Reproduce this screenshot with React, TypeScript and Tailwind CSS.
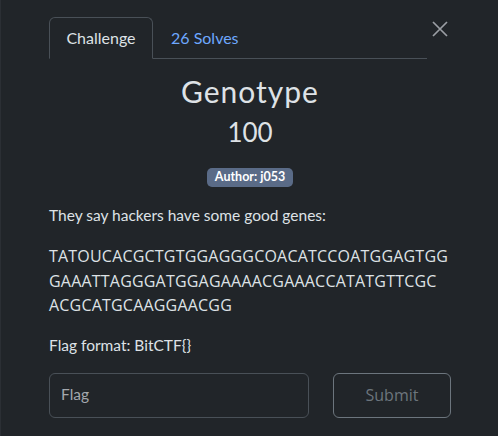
import React from "react";

export default function App() {
  const lato = { fontFamily: "Lato, 'Noto Sans', sans-serif" };
  return (
    <div className="w-[498px] h-[436px] bg-[#212529] flex overflow-hidden" style={lato}>
      <div className="w-px h-full bg-[#2b2f34] shrink-0" />
      <div className="flex-1 flex flex-col pl-[48px] pr-[47px] pt-[17px]">
        <div className="flex items-start">
          <div className="flex w-[378px] border-b border-[#495057] h-[42px]">
            <div className="w-[104px] h-[42px] -mb-px border border-[#495057] border-b-[#212529] rounded-t-[6px] flex items-center justify-center text-[16px] text-[#dee2e6] bg-[#212529]">
              Challenge
            </div>
            <div className="px-[18px] h-[41px] flex items-center text-[16px] text-[#6ea8fe]">26 Solves</div>
          </div>
          <div className="flex-1 flex justify-end pt-[4px]">
            <svg width="16" height="16" viewBox="0 0 16 16" className="mr-[3px]">
              <path d="M1 1L15 15M15 1L1 15" stroke="#9a9ea3" strokeWidth="1.7" />
            </svg>
          </div>
        </div>
        <div className="flex flex-col items-center">
          <div className="mt-[14px] text-[30px] leading-[36px] tracking-[1px] text-[#dee2e6] font-normal">Genotype</div>
          <div className="mt-[7px] text-[26px] leading-[32px] text-[#dee2e6]">100</div>
          <div className="mt-[20px] h-[19px] px-[8px] rounded-[5px] bg-[#5a6b87] text-white text-[12.5px] font-bold flex items-center">
            Author: j053
          </div>
        </div>
        <div className="mt-[16px] text-[15.5px] leading-[24px] text-[#dee2e6]">They say hackers have some good genes:</div>
        <div
          className="mt-[17px] text-[16px] leading-[24.5px] tracking-[0.2px] text-[#dee2e6] w-[402px] whitespace-nowrap"
          style={{ fontFamily: "'Open Sans', sans-serif" }}
        >
          TATOUCACGCTGTGGAGGGCOACATCCOATGGAGTGG<br />
          GAAATTAGGGATGGAGAAAACGAAACCATATGTTCGC<br />
          ACGCATGCAAGGAACGG
        </div>
        <div className="mt-[15px] text-[15.5px] leading-[24px] text-[#dee2e6]">Flag format: BitCTF&#123;&#125;</div>
        <div className="mt-[16px] flex">
          <div className="w-[260px] h-[45px] border border-[#495057] rounded-[6px] flex items-center pl-[11px] text-[15.5px] text-[#a3a8ad]">
            Flag
          </div>
          <div
            className="ml-[24px] w-[118px] h-[45px] border border-[#6c757d] rounded-[6px] flex items-center justify-center text-[16px] text-[#6c757d]"
            style={{ fontFamily: "'Open Sans', sans-serif" }}
          >
            Submit
          </div>
        </div>
      </div>
    </div>
  );
}
